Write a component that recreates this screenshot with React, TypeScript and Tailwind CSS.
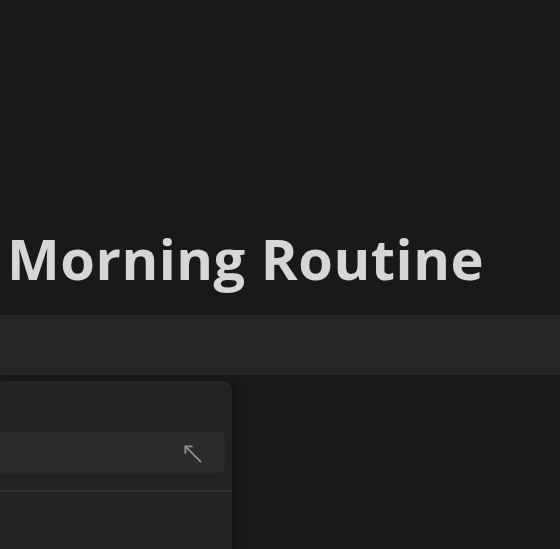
import { MoveUpLeft } from "lucide-react";

export default function App() {
  return (
    <div className="w-[560px] h-[549px] overflow-hidden bg-[#191919] flex flex-col" style={{ fontFamily: "'Open Sans', 'Noto Sans', sans-serif" }}>
      {/* Page title */}
      <div className="h-[315px] flex items-end pl-[7px] pb-[29px]">
        <h1 className="text-[56px] font-bold leading-none text-[#d6d6d6] whitespace-nowrap tracking-[0.5px]">Morning Routine</h1>
      </div>

      {/* Toolbar band */}
      <div className="h-[60px] bg-[#252525] shrink-0" />

      {/* Content */}
      <div className="flex flex-1 pt-[6px]">
        <div className="w-[232px] shrink-0 bg-[#232323] rounded-tr-[8px] shadow-[4px_0_6px_rgba(0,0,0,0.25)] flex flex-col pt-[51px]">
          <div className="mr-[7px] h-[41px] rounded-r-[6px] bg-[#2b2b2b] flex items-center justify-end pr-[19px]">
            <MoveUpLeft className="w-[26px] h-[26px] text-[#8f8f8f] mt-[2px]" strokeWidth={1.7} />
          </div>
          <div className="mt-[17px] h-[2px] bg-[#303030]" />
        </div>
        <div className="flex-1 pl-[23px] pt-[16px]">
          <div className="h-full bg-[#1a1a1a] rounded-tl-[10px]" />
        </div>
      </div>
    </div>
  );
}
